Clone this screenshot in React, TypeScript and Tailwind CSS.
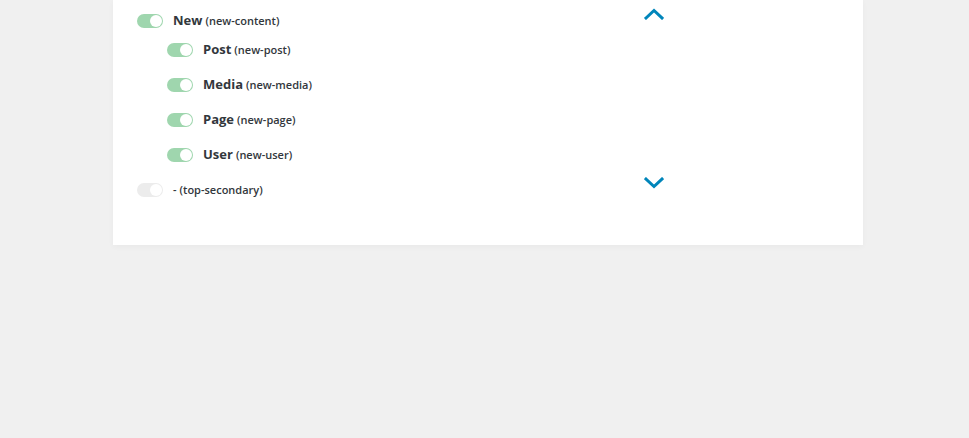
import React from 'react';

interface MenuItem {
  id: string;
  label: string;
  enabled: boolean;
  children?: MenuItem[];
}

const ITEMS: MenuItem[] = [
  {
    id: 'new-content',
    label: 'New',
    enabled: true,
    children: [
      { id: 'new-post', label: 'Post', enabled: true },
      { id: 'new-media', label: 'Media', enabled: true },
      { id: 'new-page', label: 'Page', enabled: true },
      { id: 'new-user', label: 'User', enabled: true },
    ],
  },
  { id: 'top-secondary', label: '-', enabled: false },
];

const Toggle: React.FC<{ on: boolean }> = ({ on }) => (
  <span
    className={`flex h-[14px] w-[26px] shrink-0 items-center justify-end rounded-full px-px ${
      on ? 'bg-[#9fd6ae]' : 'bg-[#ececec]'
    }`}
  >
    <span className="h-[12px] w-[12px] rounded-full bg-white" />
  </span>
);

const Chevron: React.FC<{ up?: boolean }> = ({ up }) => (
  <svg width="20" height="12" viewBox="0 0 20 12" className="-mt-[14px] shrink-0">
    <polyline
      points={up ? '2,10 10,2.5 18,10' : '2,2 10,9.5 18,2'}
      fill="none"
      stroke="#0085ba"
      strokeWidth="3"
      strokeLinecap="square"
    />
  </svg>
);

const Row: React.FC<{ item: MenuItem; chevron?: 'up' | 'down' }> = ({ item, chevron }) => (
  <div className="flex h-[20px] items-center">
    <Toggle on={item.enabled} />
    <div className="ml-[10px] flex w-[471px] items-baseline gap-[3px] text-[#32373c]">
      {item.label !== '-' ? (
        <span className="text-[13px] font-bold">{item.label}</span>
      ) : (
        <span className="text-[11px] font-semibold">-</span>
      )}
      <span className="text-[11px] font-semibold">({item.id})</span>
    </div>
    {chevron && <Chevron up={chevron === 'up'} />}
  </div>
);

export default function App() {
  return (
    <div
      className="h-[438px] w-full overflow-hidden bg-[#f0f0f0]"
      style={{ fontFamily: '"Open Sans", "Noto Sans", sans-serif' }}
    >
      <div className="ml-[113px] w-[750px] bg-white pb-[45px] pl-[24px] pt-[11px] shadow-[0_2px_6px_rgba(0,0,0,0.03)]">
        <Row item={ITEMS[0]} chevron="up" />
        <div className="mt-[9px] flex flex-col gap-[15px] pl-[30px]">
          {ITEMS[0].children!.map((child) => (
            <Row key={child.id} item={child} />
          ))}
        </div>
        <div className="mt-[15px]">
          <Row item={ITEMS[1]} chevron="down" />
        </div>
      </div>
    </div>
  );
}
